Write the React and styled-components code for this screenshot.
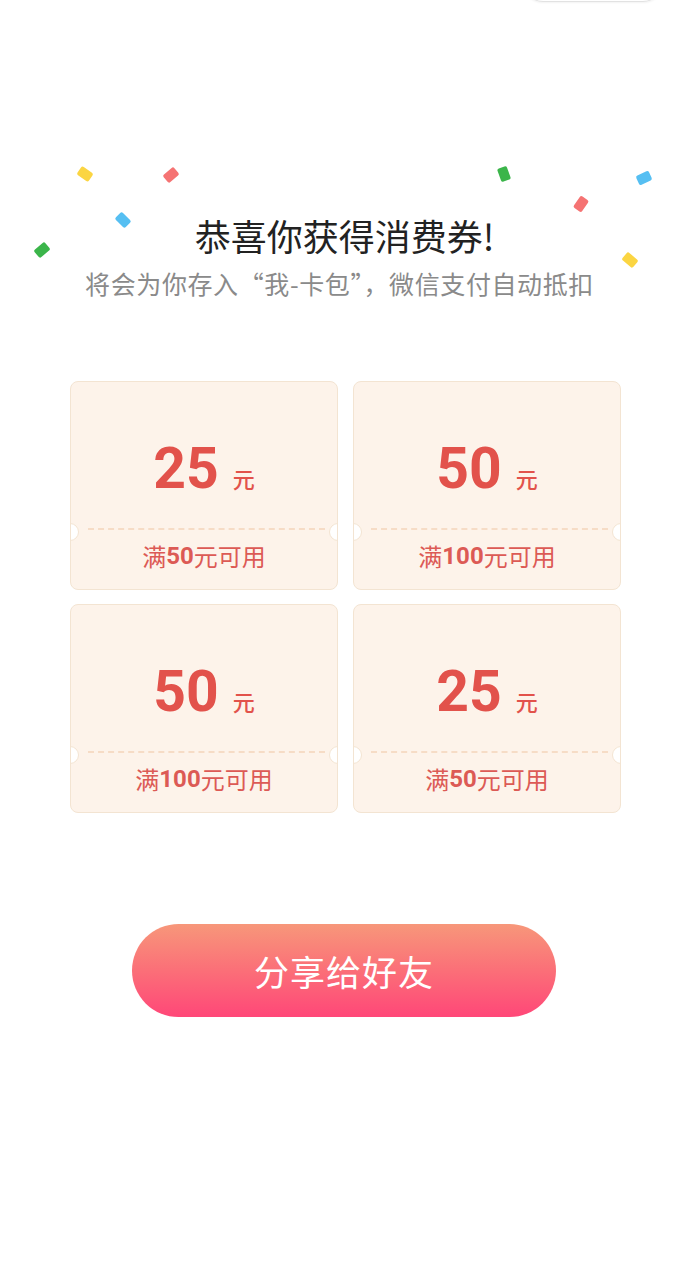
import React from "react"
import styled, { createGlobalStyle } from "styled-components"

const GlobalStyle = createGlobalStyle`
  body {
    margin: 0;
    background: #ffffff;
    font-family: "Noto Sans CJK SC", "Noto Sans", sans-serif;
  }
`

const Page = styled.div`
  position: relative;
  width: 679px;
  min-height: 1280px;
  overflow: hidden;
`

const Capsule = styled.div`
  position: absolute;
  top: -40px;
  left: 522px;
  width: 140px;
  height: 40px;
  border: 1px solid #e2e2e2;
  border-radius: 21px;
  box-shadow: 0 1px 2px rgba(0, 0, 0, 0.05);
`

const Header = styled.div`
  position: relative;
  padding-top: 212px;
  text-align: center;
`

const Confetti = styled.span`
  position: absolute;
  left: ${props => props.$x - 7}px;
  top: ${props => props.$y - 5}px;
  width: 14px;
  height: 10px;
  border-radius: 2px;
  background: ${props => props.$color};
  transform: rotate(${props => props.$rotate}deg);
`

const Title = styled.h1`
  margin: 0;
  font-size: 36px;
  line-height: 46px;
  font-weight: 400;
  color: #222222;
  padding-left: 10px;
`

const Subtitle = styled.p`
  margin: 7px 0 0;
  font-size: 25px;
  line-height: 36px;
  letter-spacing: 0.6px;
  color: #8a8a8a;
`

const Grid = styled.div`
  display: grid;
  grid-template-columns: 268px 268px;
  column-gap: 15px;
  row-gap: 14px;
  margin: 80px 0 0 70px;
`

const Card = styled.div`
  position: relative;
  height: 209px;
  box-sizing: border-box;
  background: #fdf3ea;
  border: 1px solid #f3e4d2;
  border-radius: 8px;
  overflow: hidden;
  display: flex;
  flex-direction: column;
`

const Amount = styled.div`
  height: 146px;
  box-sizing: border-box;
  padding-top: 59px;
  display: flex;
  justify-content: center;
  align-items: baseline;
  gap: 14px;
  color: #e2524b;
`

const Value = styled.span`
  font-family: Roboto, "Noto Sans", sans-serif;
  font-size: 57px;
  line-height: 56px;
  font-weight: 700;
`

const Unit = styled.span`
  font-size: 22px;
  font-weight: 500;
`

const Divider = styled.div`
  position: relative;
  margin: 0 12px 0 17px;
  border-top: 2px dashed #f6dcc6;
  &::before,
  &::after {
    content: "";
    position: absolute;
    top: -7px;
    width: 16px;
    height: 16px;
    border-radius: 50%;
    background: #ffffff;
    border: 1px solid #f3e4d2;
  }
  &::before {
    left: -27px;
  }
  &::after {
    right: -22px;
  }
`

const Condition = styled.div`
  flex: 1;
  display: flex;
  align-items: center;
  justify-content: center;
  font-size: 24px;
  color: #dc5a55;
  padding-bottom: 8px;
  b {
    font-family: Roboto, "Noto Sans", sans-serif;
    font-weight: 700;
  }
`

const Button = styled.button`
  display: flex;
  align-items: center;
  justify-content: center;
  margin: 111px 0 0 132px;
  width: 424px;
  height: 93px;
  border: none;
  border-radius: 47px;
  background: linear-gradient(180deg, #f7977a 0%, #fb6f78 50%, #ff4778 100%);
  color: #ffffff;
  font-family: "Noto Sans CJK SC", "Noto Sans", sans-serif;
  font-size: 35px;
  letter-spacing: 1px;
  padding: 0;
`

const confetti = [
  { x: 85, y: 174, color: "#fbd542", rotate: 35 },
  { x: 171, y: 175, color: "#f57373", rotate: -40 },
  { x: 123, y: 220, color: "#56bff2", rotate: 45 },
  { x: 42, y: 250, color: "#3bb54a", rotate: -40 },
  { x: 504, y: 174, color: "#3bb54a", rotate: 70 },
  { x: 644, y: 178, color: "#56bff2", rotate: -25 },
  { x: 581, y: 204, color: "#f57373", rotate: -55 },
  { x: 630, y: 260, color: "#fbd542", rotate: 40 },
]

const coupons = [
  { value: 25, min: 50 },
  { value: 50, min: 100 },
  { value: 50, min: 100 },
  { value: 25, min: 50 },
]

export default function App() {
  return (
    <Page>
      <GlobalStyle />
      <Capsule />
      <Header>
        {confetti.map((c, i) => (
          <Confetti key={i} $x={c.x} $y={c.y} $color={c.color} $rotate={c.rotate} />
        ))}
        <Title>恭喜你获得消费券!</Title>
        <Subtitle>将会为你存入“我-卡包”，微信支付自动抵扣</Subtitle>
      </Header>
      <Grid>
        {coupons.map((c, i) => (
          <Card key={i}>
            <Amount>
              <Value>{c.value}</Value>
              <Unit>元</Unit>
            </Amount>
            <Divider />
            <Condition>
              满<b>{c.min}</b>元可用
            </Condition>
          </Card>
        ))}
      </Grid>
      <Button>分享给好友</Button>
    </Page>
  )
}
